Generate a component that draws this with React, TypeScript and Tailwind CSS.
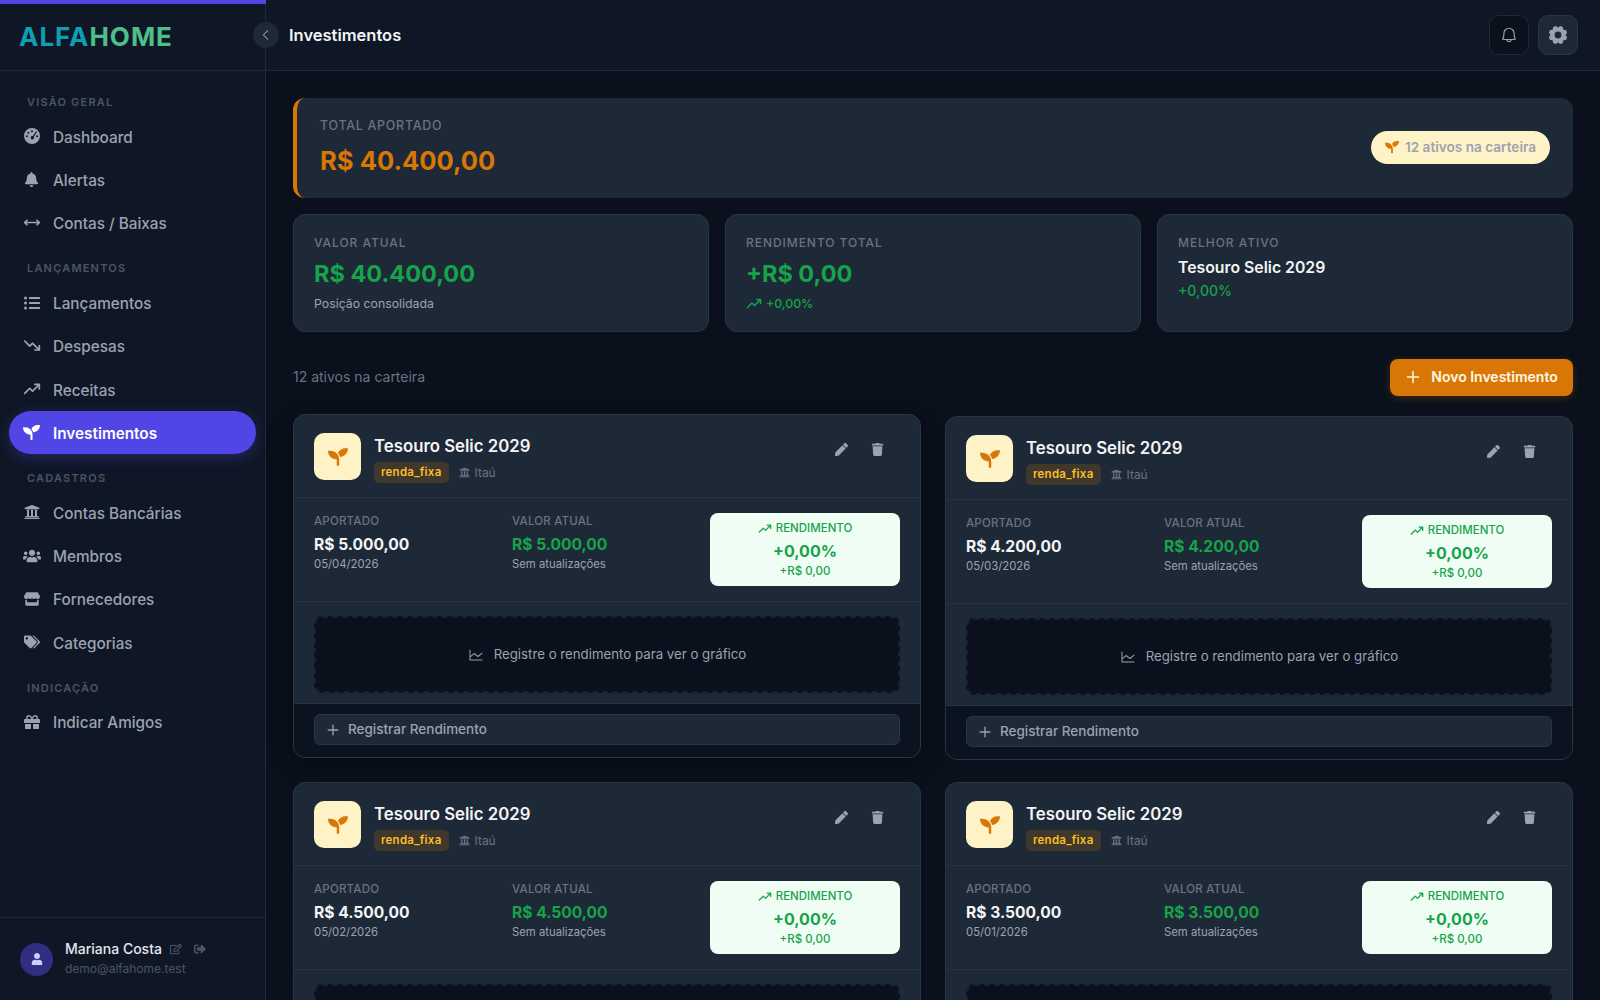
import { FaTags, FaSeedling, FaUsers, FaStore, FaGift, FaUniversity, FaBell, FaListUl, FaPen, FaTrash, FaUser, FaRegEdit, FaSignOutAlt } from "react-icons/fa";
import { PiArrowsHorizontalBold, PiTrendDownBold, PiTrendUpBold, PiChartLine, PiPlusBold, PiBell, PiGearFill, PiCaretLeft } from "react-icons/pi";
import type { ReactNode } from "react";

const font = "font-['Inter','Liberation_Sans',sans-serif]";

type NavItem = { label: string; icon: ReactNode; active?: boolean };

function GaugeIcon() {
  return (
    <svg viewBox="0 0 16 16" className="h-4 w-4" fill="currentColor">
      <path
        fillRule="evenodd"
        d="M8 0a8 8 0 1 1 0 16A8 8 0 0 1 8 0ZM8 2.2a1 1 0 1 0 0 2 1 1 0 0 0 0-2ZM4.4 3.7a1 1 0 1 0 0 2 1 1 0 0 0 0-2ZM2.9 7.3a1 1 0 1 0 0 2 1 1 0 0 0 0-2ZM13.1 7.3a1 1 0 1 0 0 2 1 1 0 0 0 0-2ZM11.9 3.5 8.7 8.2a1.6 1.6 0 1 0 1 .7l3.1-4.7a.55.55 0 0 0-.9-.7Z"
      />
    </svg>
  );
}

const nav: { title: string; items: NavItem[] }[] = [
  {
    title: "VISÃO GERAL",
    items: [
      { label: "Dashboard", icon: <GaugeIcon /> },
      { label: "Alertas", icon: <FaBell className="h-[15px] w-[15px]" /> },
      { label: "Contas / Baixas", icon: <PiArrowsHorizontalBold className="h-[21px] w-[21px]" /> },
    ],
  },
  {
    title: "LANÇAMENTOS",
    items: [
      { label: "Lançamentos", icon: <FaListUl className="h-4 w-4" /> },
      { label: "Despesas", icon: <PiTrendDownBold className="h-[21px] w-[21px]" /> },
      { label: "Receitas", icon: <PiTrendUpBold className="h-[21px] w-[21px]" /> },
      { label: "Investimentos", icon: <FaSeedling className="h-[17px] w-[17px]" />, active: true },
    ],
  },
  {
    title: "CADASTROS",
    items: [
      { label: "Contas Bancárias", icon: <FaUniversity className="h-4 w-4" /> },
      { label: "Membros", icon: <FaUsers className="h-5 w-5" /> },
      { label: "Fornecedores", icon: <FaStore className="h-4 w-4" /> },
      { label: "Categorias", icon: <FaTags className="h-4 w-4" /> },
    ],
  },
  {
    title: "INDICAÇÃO",
    items: [{ label: "Indicar Amigos", icon: <FaGift className="h-4 w-4" /> }],
  },
];

const investments = [
  { value: "R$ 5.000,00", date: "05/04/2026", lifted: true },
  { value: "R$ 4.200,00", date: "05/03/2026" },
  { value: "R$ 4.500,00", date: "05/02/2026" },
  { value: "R$ 3.500,00", date: "05/01/2026" },
];

function Sidebar() {
  return (
    <aside className="flex h-full w-[266px] shrink-0 flex-col border-r border-[#1f2937] bg-[#0f1726]">
      <div className="flex h-[71px] shrink-0 items-center border-b border-[#1f2937] pt-[4px] pl-[19px]">
        <span className="text-[26px] leading-none font-bold tracking-[1px]">
          <span className="text-[#0e9fb3]">ALFA</span>
          <span className="text-[#4dc08a]">HOME</span>
        </span>
      </div>
      <nav className="flex flex-col gap-[15px] px-[9px] pt-[22px]">
        {nav.map((group) => (
          <div key={group.title}>
            <div className="mb-[5.5px] h-4 pt-px pl-[18px] text-[11px] leading-4 font-semibold tracking-[1.2px] text-[#4b5563]">
              {group.title}
            </div>
            {group.items.map((item) => (
              <div
                key={item.label}
                className={
                  item.active
                    ? "flex h-[43.3px] items-center gap-[12.5px] rounded-full bg-[#4f46e5] px-[13.5px] pt-[4px] text-[15.3px] font-semibold text-white shadow-[0_4px_14px_rgba(79,70,229,0.3)]"
                    : "flex h-[43.3px] items-center gap-[12.5px] px-[13.5px] pt-[4px] text-[15.3px] font-medium text-[#9ca3af]"
                }
              >
                <span className="flex w-[18px] -translate-y-[2px] justify-center">{item.icon}</span>
                {item.label}
              </div>
            ))}
          </div>
        ))}
      </nav>
      <div className="mt-auto flex h-[83px] items-center gap-3 border-t border-[#1f2937] px-5">
        <div className="flex h-[33px] w-[33px] items-center justify-center rounded-full bg-[#312e81] text-[#c7d2fe]">
          <FaUser className="h-3 w-3" />
        </div>
        <div>
          <div className="flex items-center text-[14px] leading-5 font-medium text-[#e5e7eb]">
            Mariana Costa
            <FaRegEdit className="ml-2 h-3 w-3 text-[#4b5563]" />
            <FaSignOutAlt className="ml-3 h-3 w-3 text-[#4b5563]" />
          </div>
          <div className="text-[12px] leading-5 text-[#4b5563]">demo@alfahome.test</div>
        </div>
      </div>
    </aside>
  );
}

function Stat({ label, children }: { label: string; children: ReactNode }) {
  return (
    <div className="h-[118px] rounded-xl border border-[#2a3544] bg-[#1e2937] px-5 pt-5">
      <div className="text-[12px] leading-4 font-medium tracking-[0.95px] text-[#6b7280]">{label}</div>
      {children}
    </div>
  );
}

function InvestmentCard({ value, date, lifted }: { value: string; date: string; lifted?: boolean }) {
  return (
    <div
      className={
        lifted
          ? "-translate-y-[2px] overflow-hidden rounded-xl border border-[#2a3544] bg-[#1e2937] shadow-[0_8px_24px_rgba(0,0,0,0.35)]"
          : "overflow-hidden rounded-xl border border-[#2a3544] bg-[#1e2937]"
      }
    >
      <div className="flex h-[83px] items-start border-b border-[#27323f] pt-[18px] pr-[25px] pl-5">
        <div className="flex h-[47px] w-[47px] items-center justify-center rounded-[10px] bg-[#fef3c7] text-[#d97706]">
          <FaSeedling className="h-5 w-5" />
        </div>
        <div className="ml-[13px]">
          <div className="mt-[1px] text-[16.8px] leading-6 font-semibold text-[#f3f4f6]">Tesouro Selic 2029</div>
          <div className="mt-[4px] flex items-center">
            <span className="flex h-[21px] items-center rounded-[5px] bg-[#40372d] px-[7px] text-[11.5px] font-semibold tracking-[0.25px] text-[#fbbf24]">
              renda_fixa
            </span>
            <FaUniversity className="mr-[5px] ml-[10px] h-[11px] w-[11px] text-[#6b7280]" />
            <span className="text-[12px] text-[#6b7280]">Itaú</span>
          </div>
        </div>
        <div className="ml-auto -mt-[2px] flex text-[#9ca3af]">
          <button className="flex h-9 w-9 items-center justify-center">
            <FaPen className="h-[13px] w-[13px]" />
          </button>
          <button className="flex h-9 w-9 items-center justify-center">
            <FaTrash className="h-[13px] w-[13px]" />
          </button>
        </div>
      </div>
      <div className="grid h-[104px] grid-cols-3 gap-2 border-b border-[#27323f] px-5 pt-[15px]">
        <div>
          <div className="text-[11.5px] leading-4 font-medium tracking-[0.2px] text-[#6b7280]">APORTADO</div>
          <div className="mt-[4px] text-[15.6px] leading-6 font-bold text-[#f3f4f6]">{value}</div>
          <div className="-mt-[1px] text-[11.3px] leading-4 text-[#9ca3af]">{date}</div>
        </div>
        <div>
          <div className="text-[11.5px] leading-4 font-medium tracking-[0.2px] text-[#6b7280]">VALOR ATUAL</div>
          <div className="mt-[4px] text-[15.6px] leading-6 font-bold text-[#16a34a]">{value}</div>
          <div className="-mt-[1px] text-[11.3px] leading-4 text-[#9ca3af]">Sem atualizações</div>
        </div>
        <div className="flex h-[73px] flex-col items-center rounded-lg bg-[#f0fdf4] pt-[8px] text-[#16a34a]">
          <div className="flex h-4 items-center gap-1 text-[11.5px] font-medium">
            <PiTrendUpBold className="h-[14px] w-[14px]" />
            RENDIMENTO
          </div>
          <div className="mt-[2px] text-[16px] leading-6 font-bold">+0,00%</div>
          <div className="text-[11.5px] leading-4 font-medium">+R$ 0,00</div>
        </div>
      </div>
      <div className="h-[102px] border-b border-[#2a3544] px-5 pt-[14px]">
        <div className="flex h-[77px] items-center justify-center gap-[10px] rounded-lg border-2 border-dashed border-[#18222f] bg-[#0a111d] text-[13.25px] text-[#9ca3af]">
          <PiChartLine className="h-4 w-4" />
          Registre o rendimento para ver o gráfico
        </div>
      </div>
      <div className="h-[53px] bg-[#0c1320] px-5 pt-[10px]">
        <button className="flex h-[31px] w-full items-center gap-2 rounded-md border border-[#2a3544] bg-[#1e2937] pl-[11px] text-[13.5px] font-medium text-[#9ca3af]">
          <PiPlusBold className="h-[14px] w-[14px]" />
          Registrar Rendimento
        </button>
      </div>
    </div>
  );
}

export default function App() {
  return (
    <div className={`relative flex h-[1000px] overflow-hidden bg-[#0a101c] ${font}`}>
      <div className="absolute top-0 left-0 z-10 h-1 w-[266px] bg-[#4f46e5]" />
      <Sidebar />
      <div className="flex min-w-0 flex-1 flex-col">
        <header className="flex h-[71px] shrink-0 items-center gap-[9px] border-b border-[#1f2937] bg-[#0f1726] pr-[22px] pl-[23px]">
          <h1 className="mr-auto pt-[1px] text-[16.5px] font-semibold text-[#f3f4f6]">Investimentos</h1>
          <button className="flex h-10 w-10 items-center justify-center rounded-[10px] border border-[#1f2937] bg-[#0a111d] text-[#9ca3af]">
            <PiBell className="h-[18px] w-[18px]" />
          </button>
          <button className="flex h-10 w-10 items-center justify-center rounded-[10px] border border-[#2a3544] bg-[#1e2937] text-[#9ca3af]">
            <PiGearFill className="h-[22px] w-[22px]" />
          </button>
        </header>
        <main className="flex flex-col pt-[27px] pr-[27px] pl-[27px]">
          <div className="flex h-[100px] items-center justify-between rounded-xl border-l-4 border-[#d97706] bg-[#1e2937] px-[23px]">
            <div>
              <div className="text-[12.5px] leading-4 font-medium tracking-[0.7px] text-[#6b7280]">TOTAL APORTADO</div>
              <div className="mt-[9px] text-[25.6px] leading-9 font-bold text-[#d97706]">R$ 40.400,00</div>
            </div>
            <div className="-mt-[2px] flex h-[33px] w-[179px] items-center justify-center gap-[6px] rounded-full bg-[#fef3c7] text-[13.6px] font-semibold text-[#9ca3af]">
              <FaSeedling className="h-[14px] w-[14px] text-[#d97706]" />
              12 ativos na carteira
            </div>
          </div>
          <div className="mt-4 grid grid-cols-3 gap-4">
            <Stat label="VALOR ATUAL">
              <div className="mt-[5px] text-[23.5px] leading-9 font-bold text-[#16a34a]">R$ 40.400,00</div>
              <div className="mt-[2px] text-[12.3px] leading-5 text-[#9ca3af]">Posição consolidada</div>
            </Stat>
            <Stat label="RENDIMENTO TOTAL">
              <div className="mt-[5px] text-[23.5px] leading-9 font-bold text-[#16a34a]">+R$ 0,00</div>
              <div className="mt-[2px] flex items-center gap-1 text-[12.3px] leading-5 font-medium text-[#16a34a]">
                <PiTrendUpBold className="h-4 w-4" />
                +0,00%
              </div>
            </Stat>
            <Stat label="MELHOR ATIVO">
              <div className="mt-[5px] text-[15.8px] leading-6 font-semibold text-[#f3f4f6]">Tesouro Selic 2029</div>
              <div className="mt-[1px] text-[14px] leading-5 font-medium text-[#16a34a]">+0,00%</div>
            </Stat>
          </div>
          <div className="mt-[27px] flex h-[37px] items-center justify-between">
            <span className="-mt-[2px] text-[14px] text-[#6b7280]">12 ativos na carteira</span>
            <button className="flex h-[37px] w-[183px] items-center justify-center gap-[10px] rounded-lg bg-[#d97706] pb-[2px] text-[14px] font-semibold text-[#fff7e6] shadow-[0_2px_8px_rgba(217,119,6,0.25)]">
              <PiPlusBold className="h-4 w-4" />
              Novo Investimento
            </button>
          </div>
          <div className="mt-5 grid grid-cols-2 gap-x-6 gap-y-[22px]">
            {investments.map((inv) => (
              <InvestmentCard key={inv.date} {...inv} />
            ))}
          </div>
        </main>
      </div>
      <button className="absolute top-[22px] left-[253px] z-10 flex h-[26px] w-[26px] items-center justify-center rounded-full bg-[#1e2937] text-[#9ca3af]">
        <PiCaretLeft className="h-[14px] w-[14px]" />
      </button>
    </div>
  );
}
